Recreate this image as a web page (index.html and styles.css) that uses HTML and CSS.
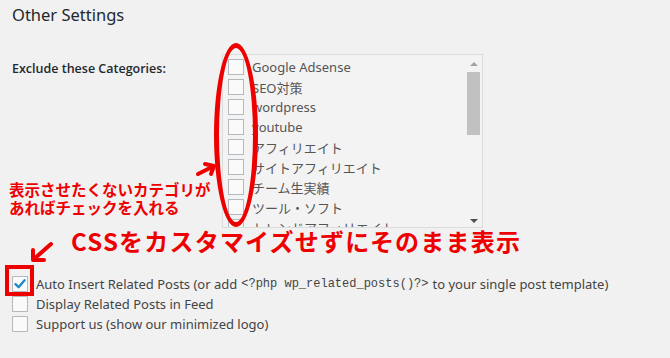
FILE: index.html
```html
<!DOCTYPE html>
<html lang="ja">
<head>
<meta charset="utf-8">
<link rel="stylesheet" href="styles.css">
</head>
<body>
<div class="page">
  <h2 class="title">Other Settings</h2>
  <div class="field">
    <div class="label">Exclude these Categories:</div>
    <div class="catbox">
      <ul class="cats">
        <li><span class="cb"></span>Google Adsense</li>
        <li><span class="cb"></span>SEO対策</li>
        <li><span class="cb"></span>wordpress</li>
        <li><span class="cb"></span>youtube</li>
        <li><span class="cb"></span>アフィリエイト</li>
        <li><span class="cb"></span>サイトアフィリエイト</li>
        <li><span class="cb"></span>チーム生実績</li>
        <li><span class="cb"></span>ツール・ソフト</li>
        <li><span class="cb"></span>トレンドアフィリエイト</li>
      </ul>
      <div class="sbar">
        <span class="arr up"></span>
        <span class="thumb"></span>
        <span class="track"></span>
        <span class="arr down"></span>
      </div>
    </div>
  </div>
  <div class="opts">
    <div class="opt"><span class="cb checked"><svg viewBox="0 0 16 16" width="16" height="16"><path d="M3.5 8.2 L6.6 11.2 L12.6 4.3" fill="none" stroke="#1e8cbe" stroke-width="2.4" stroke-linecap="round" stroke-linejoin="round"/></svg></span>Auto Insert Related Posts (or add <code>&lt;?php wp_related_posts()?&gt;</code> to your single post template)</div>
    <div class="opt"><span class="cb"></span>Display Related Posts in Feed</div>
    <div class="opt"><span class="cb"></span>Support us (show our minimized logo)</div>
  </div>

  <div class="note note1">表示させたくないカテゴリが<br>あればチェックを入れる</div>
  <div class="note note2">CSSをカスタマイズせずにそのまま表示</div>
  <div class="ellipse"></div>
  <div class="hilite"></div>
  <svg class="arrow arrow1" width="30" height="30" viewBox="0 0 30 30"><path d="M6 19 L22 11 M13 9 L22 11 L19 19" fill="none" stroke="#ee0000" stroke-width="4" stroke-linecap="round" stroke-linejoin="round"/></svg>
  <svg class="arrow arrow2" width="40" height="30" viewBox="0 0 40 30"><path d="M33 4 L16 19 M15 10 L15 20 L26 20" fill="none" stroke="#ee0000" stroke-width="4" stroke-linecap="round" stroke-linejoin="round"/></svg>
</div>
</body>
</html>
```

FILE: styles.css
```css
html, body {
  margin: 0;
  padding: 0;
  background: #f1f1f1;
}
.page {
  position: relative;
  width: 670px;
  height: 358px;
  overflow: hidden;
  font-family: "Noto Sans", "Noto Sans CJK JP", sans-serif;
  font-size: 13px;
  color: #444;
}
.title {
  margin: 0;
  padding: 4px 0 0 12px;
  height: 26px;
  font-size: 16.5px;
  font-weight: 400;
  line-height: 22px;
  color: #23282d;
}
.field {
  display: flex;
  margin-top: 24px;
  padding-left: 12px;
  height: 174px;
}
.label {
  width: 210px;
  font-family: "Open Sans", sans-serif;
  font-weight: 600;
  font-size: 12.5px;
  color: #23282d;
  padding-top: 6px;
}
.catbox {
  display: flex;
  width: 259px;
  height: 172px;
  border: 1px solid #dcdcdc;
  background: #f3f3f3;
  overflow: hidden;
}
.cats {
  list-style: none;
  margin: 0;
  padding: 2px 0 0 5px;
  flex: 1;
}
.cats li {
  display: flex;
  align-items: center;
  height: 20px;
  white-space: nowrap;
  color: #555;
  font-size: 13px;
}
.cb {
  display: inline-block;
  box-sizing: border-box;
  width: 16px;
  height: 16px;
  border: 1px solid #b4b9be;
  background: #fafafa;
  margin-right: 8px;
  flex: none;
}
.cb svg { display: block; margin: -1px; }
.sbar {
  width: 17px;
  display: flex;
  flex-direction: column;
  align-items: center;
}
.arr {
  width: 0;
  height: 0;
  border-left: 4px solid transparent;
  border-right: 4px solid transparent;
}
.arr.up {
  margin-top: 7px;
  border-bottom: 4px solid #a3a3a3;
}
.arr.down {
  margin-bottom: 4px;
  border-top: 4px solid #505050;
}
.thumb {
  margin-top: 6px;
  width: 13px;
  height: 63px;
  background: #c1c1c1;
}
.track { flex: 1; }
.opts {
  margin-top: 46px;
  padding-left: 12px;
}
.opt {
  display: flex;
  align-items: center;
  height: 20px;
  white-space: nowrap;
}
.opt .cb { margin-right: 8px; }
code {
  font-family: "Liberation Mono", monospace;
  font-size: 12px;
  margin: 0 4px;
  color: #444;
}
.note {
  position: absolute;
  color: #ee0000;
  font-family: "Noto Sans CJK JP", sans-serif;
  font-weight: 700;
  white-space: nowrap;
}
.note1 {
  left: 9px;
  top: 180px;
  font-size: 15.5px;
  line-height: 18px;
}
.note2 {
  left: 71px;
  top: 226px;
  font-size: 24px;
  line-height: 30px;
  letter-spacing: 1.2px;
}
.ellipse {
  position: absolute;
  left: 214px;
  top: 43px;
  width: 34px;
  height: 174px;
  border: 5px solid #ee0000;
  border-radius: 50%;
}
.hilite {
  position: absolute;
  left: 5px;
  top: 265px;
  width: 21px;
  height: 23px;
  border: 4px solid #ee0000;
}
.arrow { position: absolute; }
.arrow1 { left: 192px; top: 155px; }
.arrow2 { left: 18px; top: 240px; }
```
